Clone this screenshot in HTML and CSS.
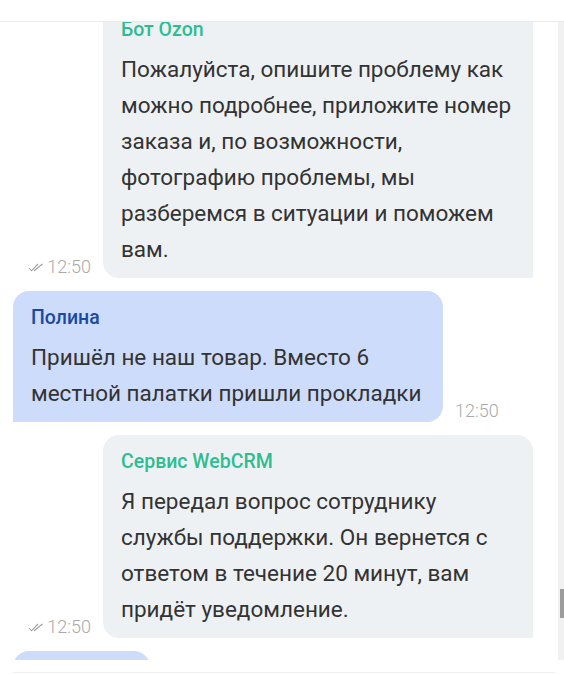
FILE: index.html
```html
<!DOCTYPE html>
<html>
<head>
    <meta charset="utf-8">
    <title>Чат</title>
    <link rel="stylesheet" href="styles.css">
</head>
<body>
    <div class="header"></div>

    <div class="chat">
        <div class="feed">
            <!-- входящее от бота -->
            <div class="row row-out cut">
                <div class="time">
                    <svg class="check" viewBox="0 0 16 9" width="16" height="9">
                        <path d="M1 5 L3.5 7.8 L10 1 M6 7.8 L14.5 1" fill="none" stroke="#9e9e9e" stroke-width="1.1"/>
                    </svg>
                    12:50
                </div>
                <div class="bubble bubble-gray">
                    <div class="name name-green">Бот Ozon</div>
                    <div class="text">Пожалуйста, опишите проблему как можно подробнее, приложите номер заказа и, по возможности, фотографию проблемы, мы разберемся в ситуации и поможем вам.</div>
                </div>
            </div>

            <!-- клиент -->
            <div class="row row-in">
                <div class="bubble bubble-blue">
                    <div class="name name-blue">Полина</div>
                    <div class="text">Пришёл не наш товар. Вместо 6 местной палатки пришли прокладки</div>
                </div>
                <div class="time">12:50</div>
            </div>

            <div class="row row-out">
                <div class="time">
                    <svg class="check" viewBox="0 0 16 9" width="16" height="9">
                        <path d="M1 5 L3.5 7.8 L10 1 M6 7.8 L14.5 1" fill="none" stroke="#9e9e9e" stroke-width="1.1"/>
                    </svg>
                    12:50
                </div>
                <div class="bubble bubble-gray">
                    <div class="name name-green">Сервис WebCRM</div>
                    <div class="text">Я передал вопрос сотруднику службы поддержки. Он вернется с ответом в течение 20 минут, вам придёт уведомление.</div>
                </div>
            </div>

            <div class="row row-in">
                <div class="bubble bubble-blue stub"></div>
            </div>
        </div>
        <div class="scrollbar"><div class="thumb"></div></div>
    </div>

    <div class="footer"></div>
</body>
</html>
```

FILE: styles.css
```css
body {
    margin: 0;
    background: #fff;
    font-family: Roboto, "Noto Sans", sans-serif;
    color: #333;
    overflow: hidden;
}

.header {
    height: 21px;
    border-bottom: 1px solid #ebebeb;
}

.chat {
    display: flex;
    height: 638px;
}

.feed {
    flex: 1;
    overflow: hidden;
    display: flex;
    flex-direction: column;
    gap: 13px;
}

.scrollbar {
    width: 6px;
    background: #f1f1f1;
    display: flex;
    flex-direction: column;
    align-items: flex-end;
}

.thumb {
    width: 4px;
    height: 29px;
    margin-top: 567px;
    background: #9c9c9c;
}

.row {
    display: flex;
    align-items: flex-end;
}

.row-out {
    padding-right: 25px;
}

.row-in {
    padding-left: 13px;
}

.time {
    display: flex;
    align-items: center;
    gap: 3px;
    font-size: 18px;
    font-weight: 300;
    color: #aaa;
    line-height: 18px;
    margin-bottom: 2px;
}

.check {
    flex-shrink: 0;
}

.row-out .time {
    width: 91px;
    justify-content: flex-end;
    margin-right: 12px;
}

.row-in .time {
    margin-left: 12px;
}

.bubble {
    width: 430px;
    box-sizing: border-box;
    padding: 17px 18px 11px;
    border-radius: 16px;
}

.bubble-gray {
    background: #eef1f4;
    border-bottom-right-radius: 0;
}

.bubble-blue {
    background: #cddcfb;
    border-bottom-left-radius: 0;
}

.cut .bubble {
    padding-top: 0;
    border-top-left-radius: 0;
    border-top-right-radius: 0;
}

.stub {
    width: 137px;
    height: 40px;
    flex-shrink: 0;
}

.name {
    font-size: 19.5px;
    font-weight: 500;
    line-height: 20px;
    margin-bottom: 11px;
}

.cut .name {
    line-height: 16px;
    margin-bottom: 13px;
}

.name-green {
    color: #2ebd90;
}

.name-blue {
    color: #1b4aa0;
}

.text {
    font-size: 22.5px;
    line-height: 36px;
}

.footer {
    height: 12px;
    border-bottom: 1px solid #eceef0;
    margin: 0 9px 0 13px;
}
```
